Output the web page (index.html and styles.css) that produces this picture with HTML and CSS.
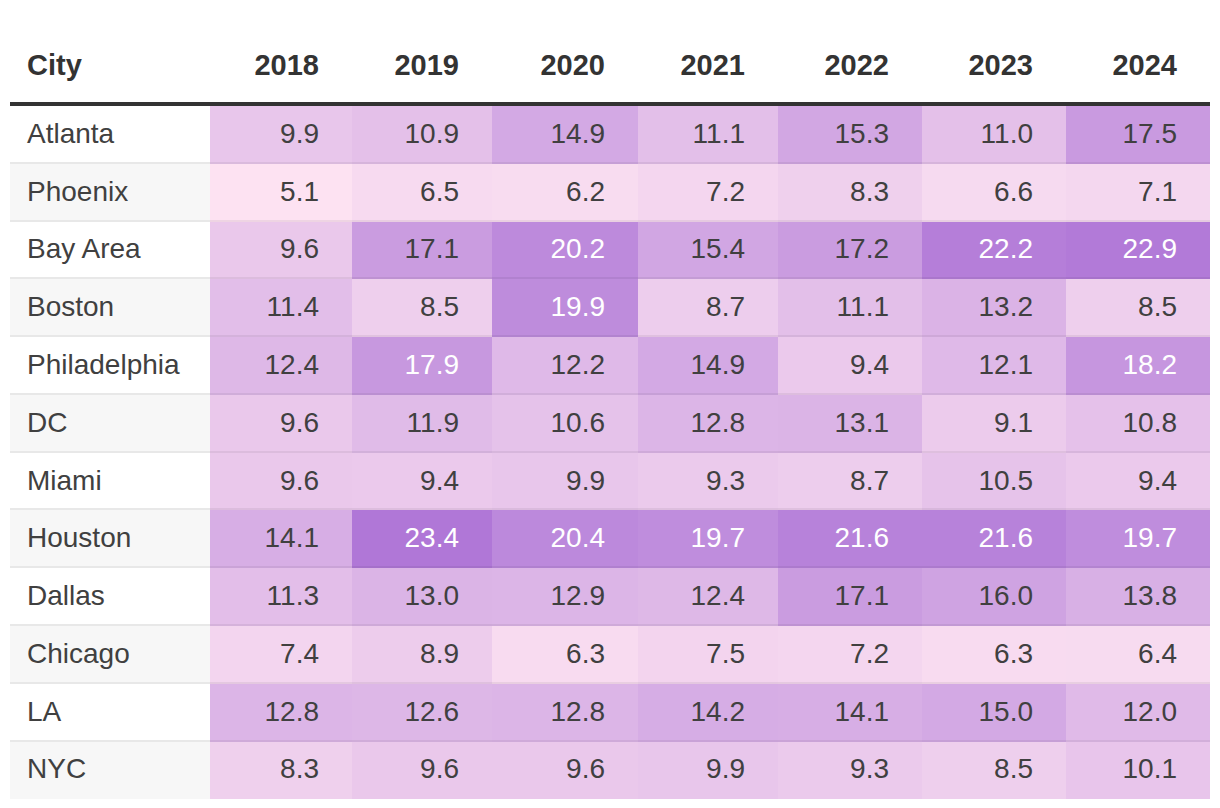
FILE: index.html
```html
<!DOCTYPE html>
<html lang="en">
<head>
<meta charset="utf-8">
<title>City table</title>
<link rel="stylesheet" href="styles.css">
</head>
<body>
<div class="wrap">
<table class="heat">
<colgroup><col class="c-city"><col class="c-a"><col class="c-b"><col class="c-c"><col class="c-b"><col class="c-d"><col class="c-d"><col class="c-d"></colgroup>
<thead>
<tr><th class="city">City</th><th>2018</th><th>2019</th><th>2020</th><th>2021</th><th>2022</th><th>2023</th><th>2024</th></tr>
</thead>
<tbody>
<tr><td class="city">Atlanta</td><td style="--v:9.9">9.9</td><td style="--v:10.9">10.9</td><td style="--v:14.9">14.9</td><td style="--v:11.1">11.1</td><td style="--v:15.3">15.3</td><td style="--v:11.0">11.0</td><td style="--v:17.5">17.5</td></tr>
<tr><td class="city">Phoenix</td><td style="--v:5.1">5.1</td><td style="--v:6.5">6.5</td><td style="--v:6.2">6.2</td><td style="--v:7.2">7.2</td><td style="--v:8.3">8.3</td><td style="--v:6.6">6.6</td><td style="--v:7.1">7.1</td></tr>
<tr><td class="city">Bay Area</td><td style="--v:9.6">9.6</td><td style="--v:17.1">17.1</td><td class="hi" style="--v:20.2">20.2</td><td style="--v:15.4">15.4</td><td style="--v:17.2">17.2</td><td class="hi" style="--v:22.2">22.2</td><td class="hi" style="--v:22.9">22.9</td></tr>
<tr><td class="city">Boston</td><td style="--v:11.4">11.4</td><td style="--v:8.5">8.5</td><td class="hi" style="--v:19.9">19.9</td><td style="--v:8.7">8.7</td><td style="--v:11.1">11.1</td><td style="--v:13.2">13.2</td><td style="--v:8.5">8.5</td></tr>
<tr><td class="city">Philadelphia</td><td style="--v:12.4">12.4</td><td class="hi" style="--v:17.9">17.9</td><td style="--v:12.2">12.2</td><td style="--v:14.9">14.9</td><td style="--v:9.4">9.4</td><td style="--v:12.1">12.1</td><td class="hi" style="--v:18.2">18.2</td></tr>
<tr><td class="city">DC</td><td style="--v:9.6">9.6</td><td style="--v:11.9">11.9</td><td style="--v:10.6">10.6</td><td style="--v:12.8">12.8</td><td style="--v:13.1">13.1</td><td style="--v:9.1">9.1</td><td style="--v:10.8">10.8</td></tr>
<tr><td class="city">Miami</td><td style="--v:9.6">9.6</td><td style="--v:9.4">9.4</td><td style="--v:9.9">9.9</td><td style="--v:9.3">9.3</td><td style="--v:8.7">8.7</td><td style="--v:10.5">10.5</td><td style="--v:9.4">9.4</td></tr>
<tr><td class="city">Houston</td><td style="--v:14.1">14.1</td><td class="hi" style="--v:23.4">23.4</td><td class="hi" style="--v:20.4">20.4</td><td class="hi" style="--v:19.7">19.7</td><td class="hi" style="--v:21.6">21.6</td><td class="hi" style="--v:21.6">21.6</td><td class="hi" style="--v:19.7">19.7</td></tr>
<tr><td class="city">Dallas</td><td style="--v:11.3">11.3</td><td style="--v:13.0">13.0</td><td style="--v:12.9">12.9</td><td style="--v:12.4">12.4</td><td style="--v:17.1">17.1</td><td style="--v:16.0">16.0</td><td style="--v:13.8">13.8</td></tr>
<tr><td class="city">Chicago</td><td style="--v:7.4">7.4</td><td style="--v:8.9">8.9</td><td style="--v:6.3">6.3</td><td style="--v:7.5">7.5</td><td style="--v:7.2">7.2</td><td style="--v:6.3">6.3</td><td style="--v:6.4">6.4</td></tr>
<tr><td class="city">LA</td><td style="--v:12.8">12.8</td><td style="--v:12.6">12.6</td><td style="--v:12.8">12.8</td><td style="--v:14.2">14.2</td><td style="--v:14.1">14.1</td><td style="--v:15.0">15.0</td><td style="--v:12.0">12.0</td></tr>
<tr><td class="city">NYC</td><td style="--v:8.3">8.3</td><td style="--v:9.6">9.6</td><td style="--v:9.6">9.6</td><td style="--v:9.9">9.9</td><td style="--v:9.3">9.3</td><td style="--v:8.5">8.5</td><td style="--v:10.1">10.1</td></tr>
</tbody>
</table>
</div>
</body>
</html>
```

FILE: styles.css
```css
html, body {
  margin: 0;
  padding: 0;
  background: #ffffff;
}

.wrap {
  padding: 28px 10px 0 10px;
}

.heat {
  width: 1200px;
  border-collapse: separate;
  border-spacing: 0;
  table-layout: fixed;
  font-family: "Liberation Sans", Arial, sans-serif;
  font-size: 28px;
  color: #404040;
}

.heat .c-city { width: 200px; }
.heat .c-a { width: 142px; }
.heat .c-b { width: 140px; }
.heat .c-c { width: 146px; }
.heat .c-d { width: 144px; }

.heat th,
.heat td {
  box-sizing: border-box;
  overflow: hidden;
  white-space: nowrap;
}

.heat th {
  font-weight: 700;
  font-size: 29px;
  text-align: right;
  line-height: 34px;
  padding: 20px 33px 20px 0;
  border-bottom: 4px solid #333333;
  color: #333333;
}

.heat th.city {
  text-align: left;
  padding-left: 17px;
  padding-right: 0;
}

.heat td {
  text-align: right;
  line-height: 34px;
  padding: 10.9px 33px 10.9px 0;
  border-bottom: 2px solid rgba(0, 0, 0, 0.06);
  background: rgb(calc(253 - 4.2 * (var(--v) - 5)), calc(227 - 5.85 * (var(--v) - 5)), calc(242 - 1.45 * (var(--v) - 5)));
  font-weight: 400;
}

.heat td.city {
  text-align: left;
  padding-left: 17px;
  padding-right: 0;
  background: #ffffff;
  border-bottom-color: #e8e8e8;
}

.heat tbody tr:nth-child(even) td.city {
  background: #f7f7f7;
}

.heat tbody tr:last-child td {
  border-bottom-color: transparent;
}

.heat td.hi {
  color: #ffffff;
}
```
